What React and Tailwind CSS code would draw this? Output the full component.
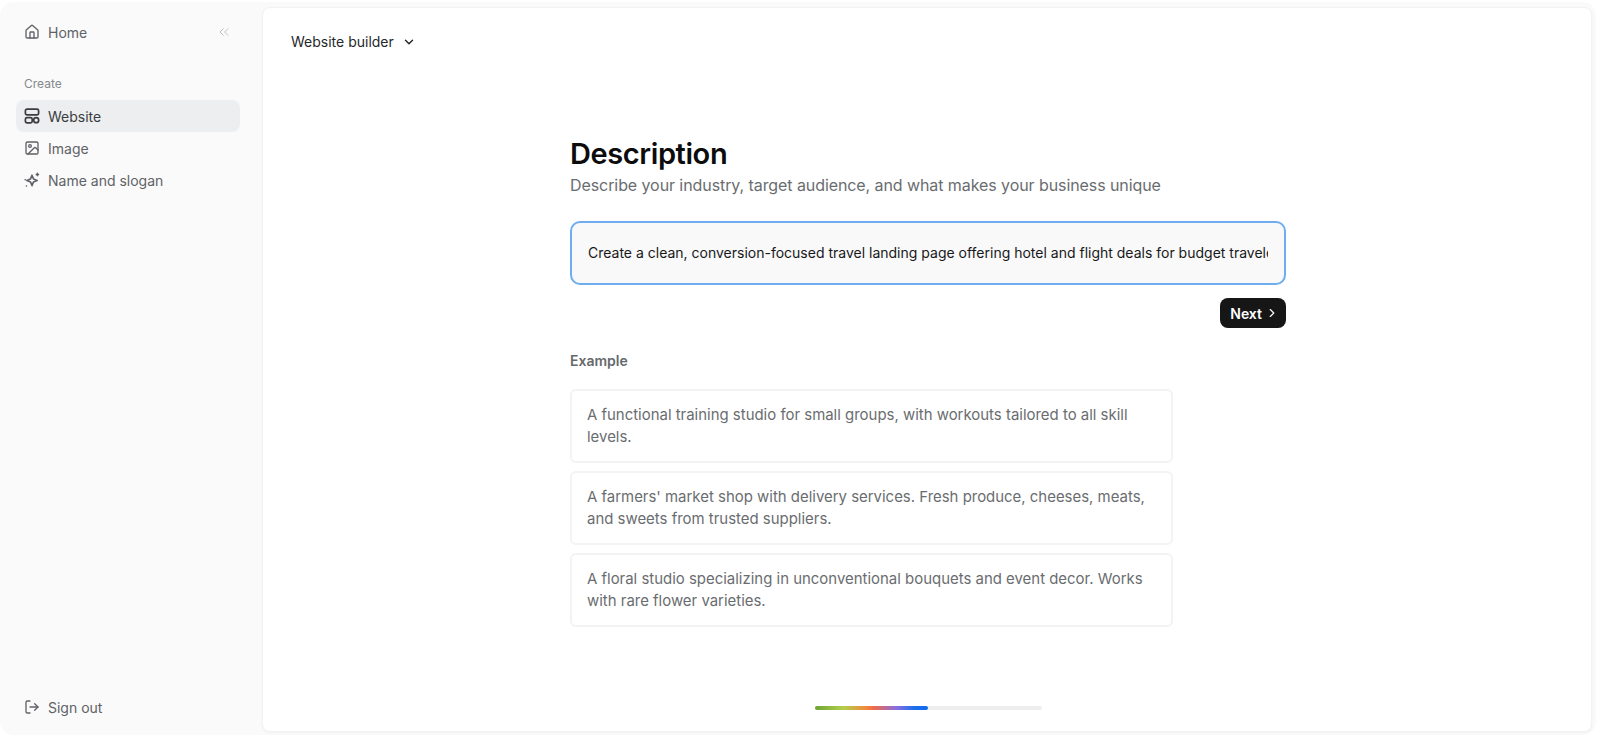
import React from "react";
import { House, ChevronsLeft, ChevronDown, ChevronRight, Image, LogOut } from "lucide-react";

function WebsiteIcon() {
  return (
    <svg width="16" height="16" viewBox="0 0 16 16" fill="none" stroke="currentColor" strokeWidth="1.7">
      <rect x="1.4" y="1.2" width="13.2" height="5.6" rx="1.6" />
      <rect x="1.4" y="9.6" width="6.8" height="5.2" rx="1.6" />
      <circle cx="12.2" cy="12.2" r="2.5" />
    </svg>
  );
}

function SparkIcon() {
  return (
    <svg width="16" height="16" viewBox="0 0 16 16" fill="none" stroke="currentColor" strokeWidth="1.6" strokeLinejoin="round" strokeLinecap="round">
      <path d="M8 3.2 L9.5 6.9 L13.2 8.4 L9.5 9.9 L8 13.6 L6.5 9.9 L2.8 8.4 L6.5 6.9 Z" />
      <path d="M13.4 1.4v2.2M12.3 2.5h2.2" />
      <path d="M1.2 7.8h.1M2.4 14h.1" />
    </svg>
  );
}

function NavItem({ icon, label, active }) {
  return (
    <div className={`flex h-8 items-center gap-2 rounded-lg px-2 text-[14px] ${active ? "bg-[#eceef0] text-[#3a3d40]" : "text-[#5f6266]"}`}>
      <span className="flex w-4 shrink-0 justify-center">{icon}</span>
      <span>{label}</span>
    </div>
  );
}

const examples = [
  "A functional training studio for small groups, with workouts tailored to all skill levels.",
  "A farmers' market shop with delivery services. Fresh produce, cheeses, meats, and sweets from trusted suppliers.",
  "A floral studio specializing in unconventional bouquets and event decor. Works with rare flower varieties.",
];

export default function App() {
  return (
    <div className="h-[737px] w-[1598px] overflow-hidden bg-white pb-[2px] pt-[2px] font-['Inter',sans-serif]">
      <div className="flex h-[733px] w-[1596px] rounded-[14px] bg-[#fafafa] pb-[3px] pr-1 pt-[5px]">
        <aside className="flex w-[262px] shrink-0 flex-col pb-[9px] pl-4 pr-[22px] pt-[9px]">
          <div className="flex h-8 items-center justify-between pl-2 pr-2 text-[#5f6266]">
            <div className="flex items-center gap-2 text-[14px]">
              <House size={16} strokeWidth={2} />
              <span>Home</span>
            </div>
            <ChevronsLeft size={16} strokeWidth={1.4} className="text-[#b9bcc0]" />
          </div>
          <div className="mt-[28px] pl-2 text-[12px] leading-4 text-[#85888c]">Create</div>
          <div className="mt-[8px] flex flex-col">
            <NavItem icon={<WebsiteIcon />} label="Website" active />
            <NavItem icon={<Image size={16} strokeWidth={2} />} label="Image" />
            <NavItem icon={<SparkIcon />} label="Name and slogan" />
          </div>
          <div className="mt-auto">
            <NavItem icon={<LogOut size={16} strokeWidth={2} />} label="Sign out" />
          </div>
        </aside>

        <main className="relative flex min-w-0 flex-1 flex-col rounded-lg border border-[#f3f3f3] bg-white shadow-[0_1px_3px_rgba(0,0,0,0.04)]">
          <div className="flex items-center gap-2 pl-[28px] pt-[25px] text-[14px] leading-[18px] text-[#26282b]">
            <span>Website builder</span>
            <ChevronDown size={14} strokeWidth={2.5} />
          </div>

          <div className="ml-[307px] mt-[84px] w-[716px]">
            <h1 className="text-[29px] font-semibold leading-[38px] tracking-[-0.4px] text-[#0c0c0d]">Description</h1>
            <p className="text-[16px] leading-6 tracking-[-0.08px] text-[#6a6d70]">
              Describe your industry, target audience, and what makes your business unique
            </p>
            <div className="mt-[24px] flex h-16 items-center rounded-[10px] border-2 border-[#6eaef0] bg-[#f9f9f9] px-4 pb-[2px]">
              <div className="w-full overflow-hidden whitespace-nowrap text-[14px] text-[#17181a]">
                Create a clean, conversion-focused travel landing page offering hotel and flight deals for budget travelers looking
              </div>
            </div>
            <div className="mt-[13px] flex justify-end">
              <button className="flex h-[30px] items-center gap-[3px] rounded-lg bg-[#161616] pl-[10px] pr-[7px] text-[14px] font-semibold text-white">
                Next
                <ChevronRight size={14} strokeWidth={2} />
              </button>
            </div>
            <div className="mt-[23px] text-[14px] font-semibold leading-[20px] text-[#66696c]">Example</div>
            <div className="mt-[18px] flex w-[603px] flex-col gap-2">
              {examples.map((t) => (
                <div key={t} className="rounded-md border-2 border-[#f3f3f4] px-[15px] py-[13px] text-[14.95px] leading-[22px] text-[#6a6d70]">
                  {t}
                </div>
              ))}
            </div>
          </div>

          <div className="absolute bottom-[21px] left-[552px] h-1 w-[227px] rounded-full bg-[#eeeeee]">
            <div className="h-full w-[113px] rounded-full bg-[linear-gradient(90deg,#6ea534_0%,#b3cf4c_25%,#f08a3c_45%,#ee6a4a_52%,#8a6fe0_72%,#1b6fec_88%,#0f6bef_100%)]" />
          </div>
        </main>
      </div>
    </div>
  );
}
